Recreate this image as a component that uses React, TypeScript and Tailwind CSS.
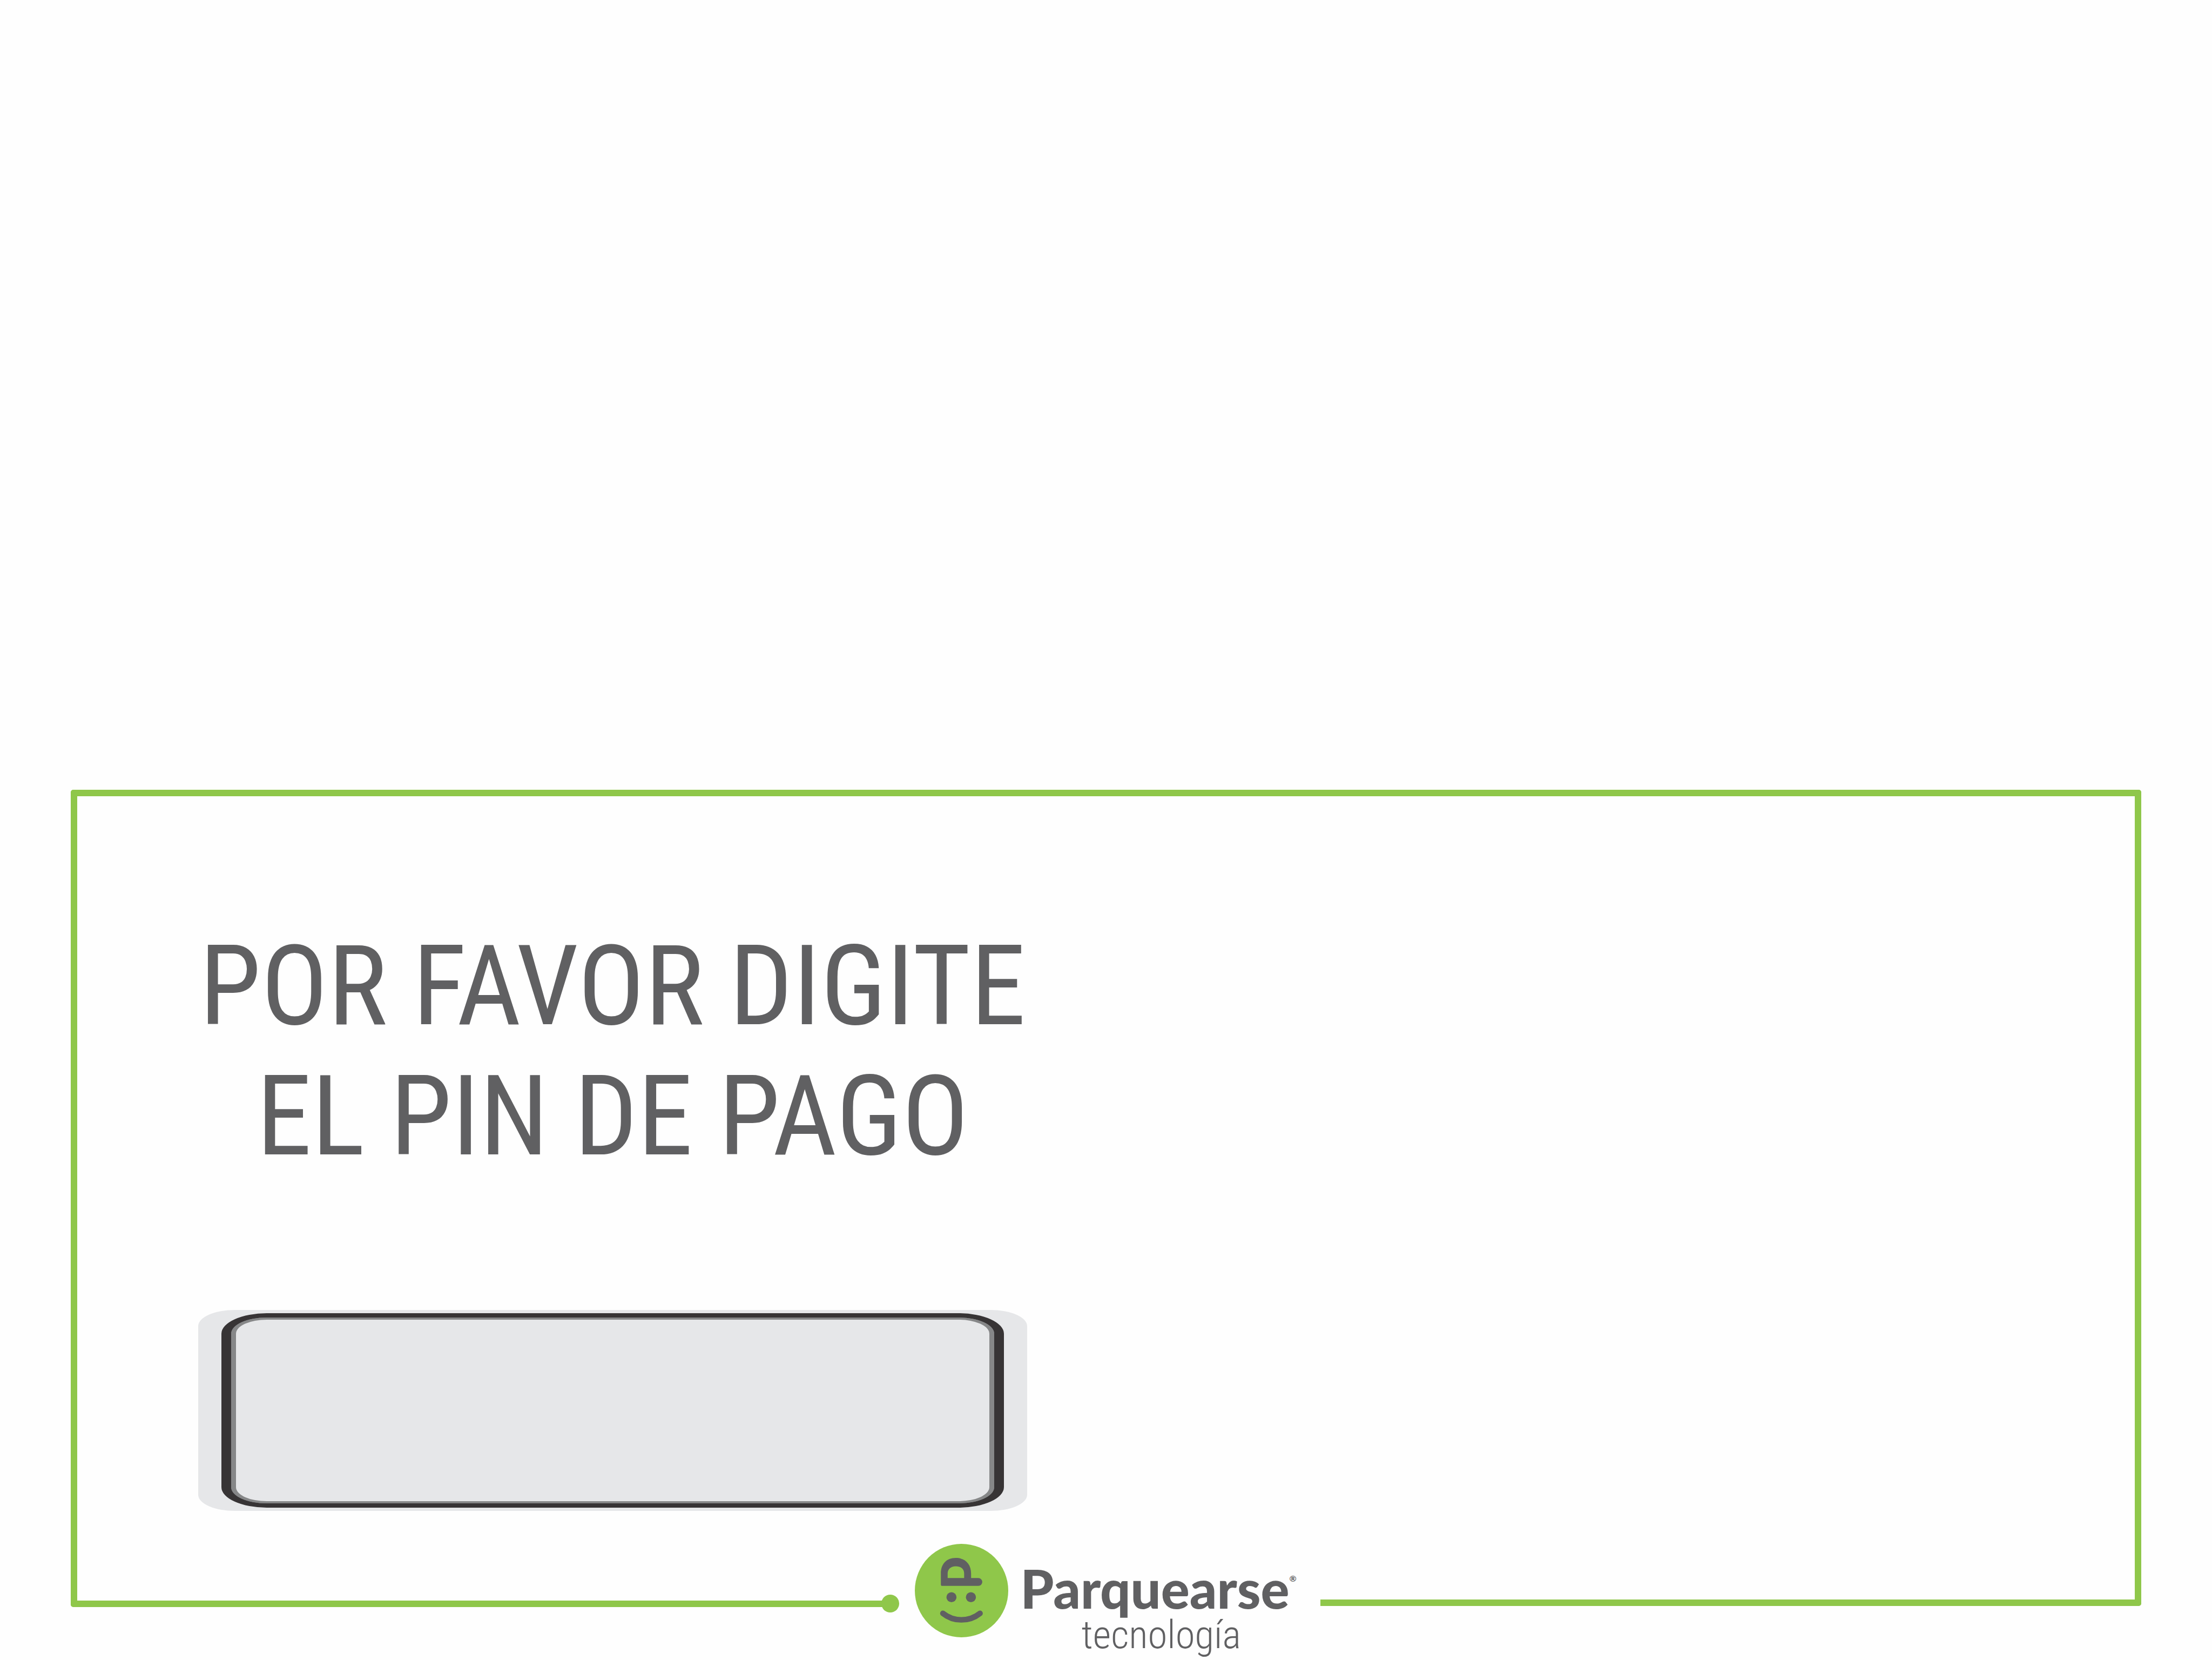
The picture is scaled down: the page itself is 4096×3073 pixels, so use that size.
function SmileMark() {
  return (
    <svg viewBox="59 51 538 538" className="size-[173px] shrink-0" aria-hidden="true">
      <circle cx="328" cy="320" r="269" fill="#8fc74a" />
      <g fill="#606062">
        <path
          fillRule="evenodd"
          d="M209 285V222C209 168 240 132 295 132C350 132 383 168 383 222V248H425a22.5 22.5 0 0 1 0 45H217q-8 0-8-8ZM248 248H343V222C343 197 325 180 295 180C265 180 248 197 248 222Z"
        />
        <circle cx="270" cy="358" r="29" />
        <circle cx="382" cy="358" r="29" />
      </g>
      <path d="M220.500 451A171 171 0 0 0 434.500 451" fill="none" stroke="#606062" strokeWidth="32" strokeLinecap="round" />
    </svg>
  );
}

function Brand() {
  return (
    <div className="flex shrink-0 items-start gap-[23px] pr-[44px] pl-[29px]">
      <SmileMark />
      <div className="flex flex-col items-center pt-[36px]">
        <div className="flex items-start font-['Lato',sans-serif]">
          <span className="text-[99px] leading-[92px] font-black">Parquearse</span>
          <span className="mt-[18px] text-[16px] leading-[20px] font-bold">®</span>
        </div>
        <span className="pl-[10px] font-['Roboto_Condensed','Roboto',sans-serif] text-[73px] leading-[80px] font-light">
          tecnología
        </span>
      </div>
    </div>
  );
}

export default function App() {
  return (
    <main className="flex min-h-screen flex-col justify-end bg-[#fefefe] px-[3.2%] text-[#606062]">
      <section className="rounded-t-[5px] border-x-[12px] border-t-[12px] border-[#8fc74a] pt-[231px] pb-[61px] pl-[224px]">
        <form className="w-[42.8%]">
          <label
            htmlFor="pin"
            className="block text-center font-['Roboto_Condensed','Roboto',sans-serif] text-[206px] leading-[241px] whitespace-nowrap"
          >
            POR FAVOR DIGITE
            <br />
            EL PIN DE PAGO
          </label>
          <div className="mt-[238px] rounded-[68px/30px] bg-[#e6e7e9] px-[43px] py-[6px]">
            <div className="rounded-[84px/38px] border-x-[18px] border-y-[8px] border-[#373435] bg-[#868788]">
              <input
                id="pin"
                type="text"
                inputMode="numeric"
                autoComplete="off"
                className="block h-[344px] w-full rounded-[66px/30px] border-x-[9px] border-y-[4px] border-[#868788] bg-[#e6e7e9] px-[60px] text-center text-[160px] outline-none"
              />
            </div>
          </div>
        </form>
      </section>
      <footer className="flex h-[215px] items-start">
        <div className="relative h-[117px] w-[40%] pr-[16px]">
          <div className="h-full rounded-bl-[5px] border-b-[12px] border-l-[12px] border-[#8fc74a]" />
          <span className="absolute right-0 -bottom-[10px] size-[33px] rounded-full bg-[#8fc74a]" />
        </div>
        <Brand />
        <div className="h-[115px] flex-1 rounded-br-[5px] border-r-[12px] border-b-[12px] border-[#8fc74a]" />
      </footer>
    </main>
  );
}
